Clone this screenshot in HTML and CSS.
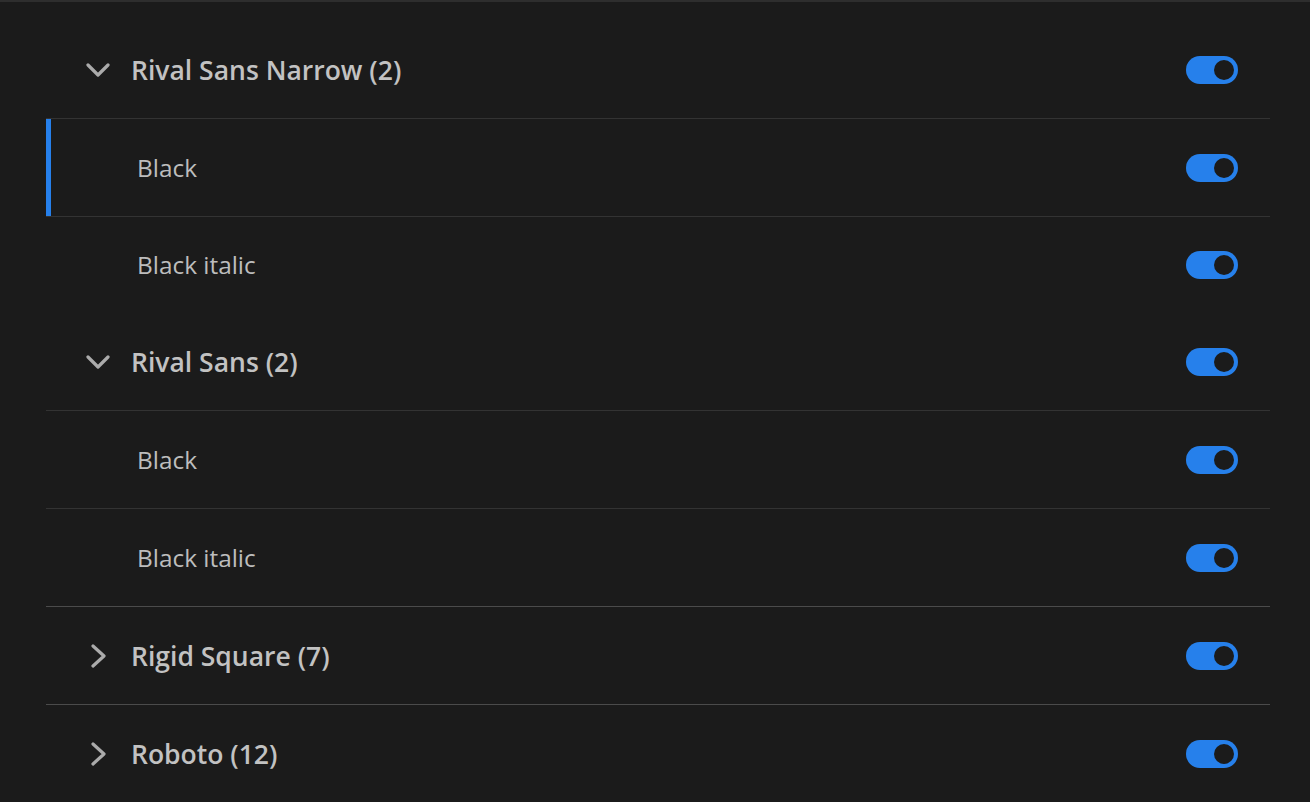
FILE: index.html
```html
<!DOCTYPE html>
<html lang="en">
<head>
<meta charset="utf-8">
<title>Font list</title>
<link rel="stylesheet" href="styles.css">
</head>
<body>
<div class="topbar"></div>
<div class="list">
  <div class="row group divider">
    <span class="caret"><svg width="24" height="14" viewBox="0 0 24 14"><path d="M2 2 L12 12 L22 2" fill="none" stroke="currentColor" stroke-width="3.2" stroke-linecap="round" stroke-linejoin="round"/></svg></span>
    <span class="name">Rival Sans Narrow (2)</span>
    <span class="toggle"><span class="knob"></span></span>
  </div>
  <div class="row item divider selected">
    <span class="name">Black</span>
    <span class="toggle"><span class="knob"></span></span>
  </div>
  <div class="row item last">
    <span class="name">Black italic</span>
    <span class="toggle"><span class="knob"></span></span>
  </div>
  <div class="row group divider">
    <span class="caret"><svg width="24" height="14" viewBox="0 0 24 14"><path d="M2 2 L12 12 L22 2" fill="none" stroke="currentColor" stroke-width="3.2" stroke-linecap="round" stroke-linejoin="round"/></svg></span>
    <span class="name">Rival Sans (2)</span>
    <span class="toggle"><span class="knob"></span></span>
  </div>
  <div class="row item divider">
    <span class="name">Black</span>
    <span class="toggle"><span class="knob"></span></span>
  </div>
  <div class="row item divider strong">
    <span class="name">Black italic</span>
    <span class="toggle"><span class="knob"></span></span>
  </div>
  <div class="row group divider strong">
    <span class="caret"><svg width="15" height="24" viewBox="0 0 15 24"><path d="M2 2 L13 12 L2 22" fill="none" stroke="currentColor" stroke-width="3.2" stroke-linecap="round" stroke-linejoin="round"/></svg></span>
    <span class="name">Rigid Square (7)</span>
    <span class="toggle"><span class="knob"></span></span>
  </div>
  <div class="row group">
    <span class="caret"><svg width="15" height="24" viewBox="0 0 15 24"><path d="M2 2 L13 12 L2 22" fill="none" stroke="currentColor" stroke-width="3.2" stroke-linecap="round" stroke-linejoin="round"/></svg></span>
    <span class="name">Roboto (12)</span>
    <span class="toggle"><span class="knob"></span></span>
  </div>
</div>
</body>
</html>
```

FILE: styles.css
```css
html, body {
  margin: 0;
  padding: 0;
  background: #1b1b1b;
  height: 100%;
  overflow: hidden;
}

body {
  font-family: "Open Sans", "Noto Sans", sans-serif;
  color: #c2c2c2;
}

.topbar {
  height: 2px;
  background: #2e2e2e;
}

.list {
  margin: 19px 40px 0 46px;
  display: flex;
  flex-direction: column;
}

.row {
  height: 97px;
  display: flex;
  align-items: center;
  padding-right: 32px;
  box-sizing: content-box;
}

.row.last {
  height: 96px;
}

.row.divider {
  border-bottom: 1px solid #333333;
}

.row.divider.strong {
  border-bottom-color: #4b4b4b;
}

.row.group {
  padding-left: 40px;
}

.row.item {
  padding-left: 91px;
}

.row.selected {
  box-shadow: inset 5px 0 0 #2680eb;
}

.caret {
  width: 24px;
  height: 24px;
  display: flex;
  align-items: center;
  justify-content: center;
  color: #ababab;
  margin-right: 21px;
  flex: none;
}

.caret svg {
  display: block;
}

.name {
  flex: 1;
  font-size: 24px;
  line-height: 30px;
  white-space: nowrap;
}

.group .name {
  font-size: 26.5px;
  font-weight: 600;
  color: #c2c2c2;
}

.item .name {
  font-size: 24.4px;
  font-weight: 400;
  color: #bdbdbd;
}

.toggle {
  flex: none;
  width: 52px;
  height: 28px;
  border-radius: 14px;
  background: #2680eb;
  display: flex;
  align-items: center;
  justify-content: flex-end;
  padding-right: 4px;
  box-sizing: border-box;
}

.knob {
  width: 20px;
  height: 20px;
  border-radius: 50%;
  background: #1b1b1b;
}
```
